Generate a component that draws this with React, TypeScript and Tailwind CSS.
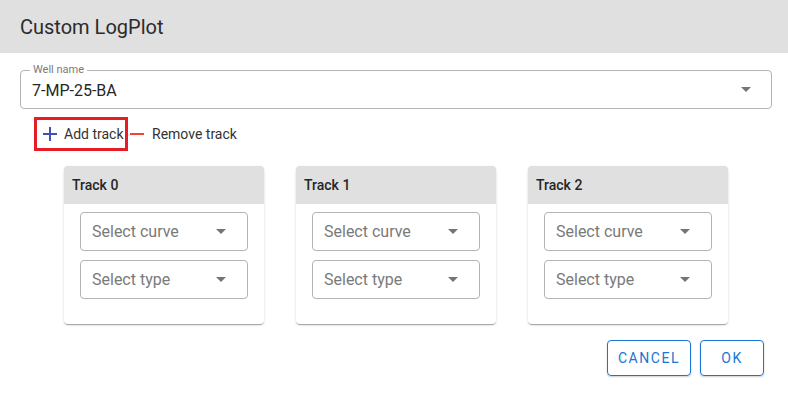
import React from "react";

const Caret = ({ className = "" }: { className?: string }) => (
  <svg width="10" height="5" viewBox="0 0 10 5" className={className}>
    <path d="M0 0 L10 0 L5 5 Z" fill="#757575" />
  </svg>
);

const SelectBox = ({ text }: { text: string }) => (
  <div className="flex items-center justify-between h-[39px] w-[168px] rounded-[4px] border border-[#b4b4b4] pl-[11px] pr-[21px]">
    <span className="text-[16px] text-[#7a7a7a]">{text}</span>
    <Caret />
  </div>
);

const TrackCard = ({ n }: { n: number }) => (
  <div className="w-[200px] h-[158px] rounded-[4px] bg-white shadow-[0_2px_1px_-1px_rgba(0,0,0,0.2),0_1px_1px_0_rgba(0,0,0,0.14),0_1px_3px_0_rgba(0,0,0,0.12)] overflow-hidden">
    <div className="h-[38px] bg-[#e0e0e0] flex items-center px-2 text-[14px] font-medium text-[#262626]">
      Track {n}
    </div>
    <div className="flex flex-col gap-[9px] pl-4 pt-2">
      <SelectBox text="Select curve" />
      <SelectBox text="Select type" />
    </div>
  </div>
);

export default function App() {
  return (
    <div
      className="w-[788px] h-[400px] bg-white overflow-hidden"
      style={{ fontFamily: "Roboto, 'Liberation Sans', sans-serif" }}
    >
      <div className="h-[53px] bg-[#e0e0e0] flex items-center px-5">
        <h1 className="text-[20px] text-[#2b2b2b] leading-none">Custom LogPlot</h1>
      </div>
      <div className="pl-5 pr-4 pt-[17px]">
        <div className="relative h-[39px] rounded-[4px] border border-[#b4b4b4] flex items-center justify-between pl-[11px] pr-[20px]">
          <span className="absolute -top-[7px] left-[9px] bg-white px-[3px] text-[11px] leading-[12px] text-[#7a7a7a]">
            Well name
          </span>
          <span className="text-[16px] text-[#262626] mt-[2px]">7-MP-25-BA</span>
          <Caret />
        </div>
        <div className="flex items-center mt-[8px] ml-[14px] h-[34px]">
          <div className="h-[34px] w-[94px] border-[3px] border-[#e81c24] flex items-center pl-[5px] gap-[6px]">
            <svg width="16" height="16" viewBox="0 0 16 16">
              <path d="M8 1 V15 M1 8 H15" stroke="#3f51b5" strokeWidth="2" />
            </svg>
            <span className="text-[14px] text-[#333]">Add track</span>
          </div>
          <div className="flex items-center ml-[2px] gap-[8px]">
            <span className="block w-[14px] h-[2px] bg-[#f04438]" />
            <span className="text-[14px] text-[#333]">Remove track</span>
          </div>
        </div>
        <div className="flex gap-8 ml-[44px] mt-[15px]">
          <TrackCard n={0} />
          <TrackCard n={1} />
          <TrackCard n={2} />
        </div>
        <div className="flex justify-end gap-[9px] mt-[16px] pr-2">
          <button className="h-[36px] w-[84px] rounded-[4px] border border-[#1976d2] text-[#1976d2] text-[14px] tracking-[0.11em] shadow-[0_1px_2px_rgba(0,0,0,0.2)]">
            CANCEL
          </button>
          <button className="h-[36px] w-[64px] rounded-[4px] border border-[#1976d2] text-[#1976d2] text-[14px] tracking-[0.11em] shadow-[0_1px_2px_rgba(0,0,0,0.2)]">
            OK
          </button>
        </div>
      </div>
    </div>
  );
}
